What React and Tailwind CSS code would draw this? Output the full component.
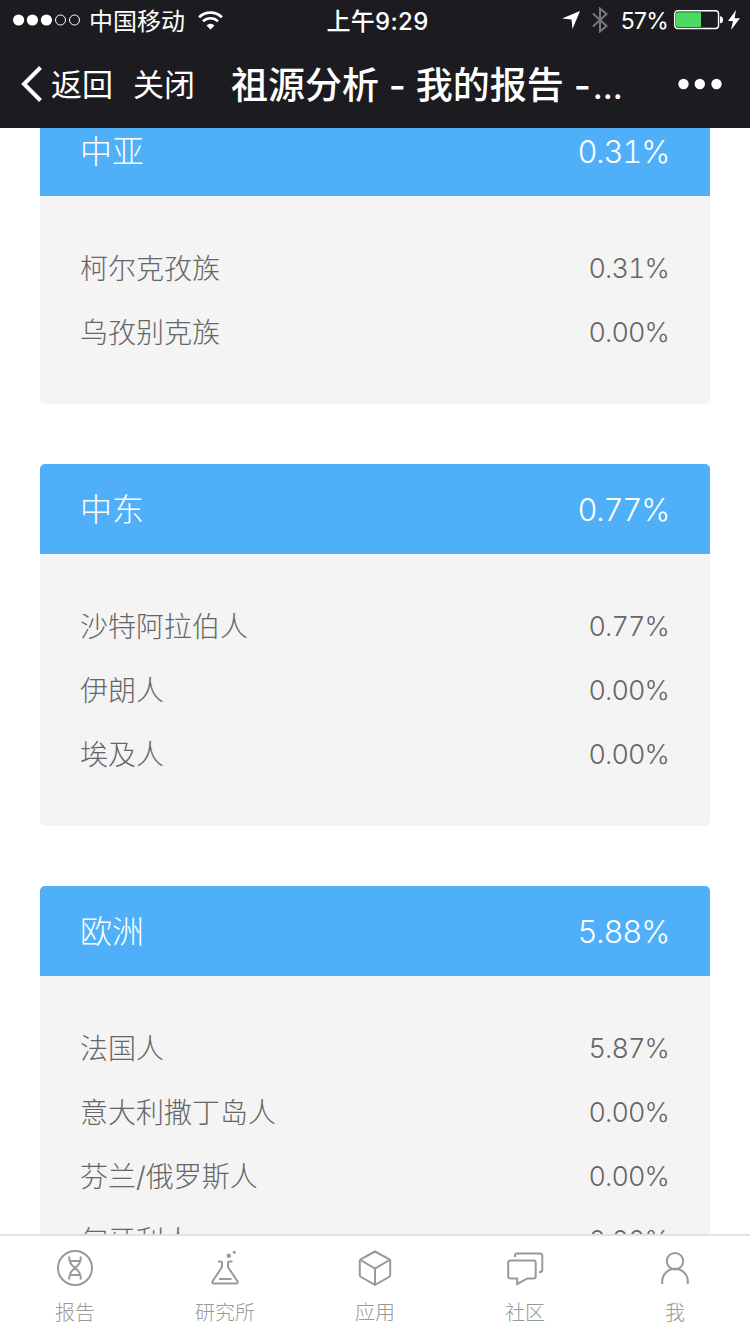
const regions = [
  {
    name: "中亚",
    percent: "0.31%",
    rows: [
      { name: "柯尔克孜族", percent: "0.31%" },
      { name: "乌孜别克族", percent: "0.00%" },
    ],
  },
  {
    name: "中东",
    percent: "0.77%",
    rows: [
      { name: "沙特阿拉伯人", percent: "0.77%" },
      { name: "伊朗人", percent: "0.00%" },
      { name: "埃及人", percent: "0.00%" },
    ],
  },
  {
    name: "欧洲",
    percent: "5.88%",
    rows: [
      { name: "法国人", percent: "5.87%" },
      { name: "意大利撒丁岛人", percent: "0.00%" },
      { name: "芬兰/俄罗斯人", percent: "0.00%" },
      { name: "匈牙利人", percent: "0.00%" },
    ],
  },
];

function StatusBar() {
  return (
    <div className="flex h-10 items-center justify-between pl-[13px] pr-[10px] text-[24px] leading-10">
      <div className="flex w-[300px] items-center">
        <svg width="68" height="12" viewBox="0 0 68 12" fill="#fff">
          <circle cx="5.6" cy="6" r="5.6" />
          <circle cx="19.4" cy="6" r="5.6" />
          <circle cx="33.4" cy="6" r="5.6" />
          <circle cx="47.5" cy="6" r="5" fill="none" stroke="#fff" />
          <circle cx="61.5" cy="6" r="5" fill="none" stroke="#fff" />
        </svg>
        <span className="ml-2 pt-[3px]">中国移动</span>
        <svg className="ml-[13px]" width="25" height="19" viewBox="0 0 25 19" fill="none" stroke="#fff" strokeWidth="2.7">
          <path d="M1.1 6.3a16.2 16.2 0 0 1 22.8 0" />
          <path d="M5 10.3a10.7 10.7 0 0 1 15 0" />
          <path d="M8.5 14.4a5.7 5.7 0 0 1 8 0l-4 4z" fill="#fff" stroke="none" />
        </svg>
      </div>
      <span className="w-[100px] whitespace-nowrap pt-[3px] font-medium tracking-[0.3px]">上午9:29</span>
      <div className="flex w-[300px] items-center justify-end">
        <svg width="18" height="18" viewBox="0 0 18 18" fill="#fff">
          <path d="M18 0L10.5 18L9.5 8.5L0 7.5z" />
        </svg>
        <svg className="ml-3" width="16" height="26" viewBox="0 0 16 26" fill="none" stroke="#78787b" strokeWidth="2">
          <path d="M1 6.5L14.5 19L8 24.5V1.5L14.5 7L1 19.5" />
        </svg>
        <span className="ml-[13px] pt-[2px] text-[23px] tracking-[-0.8px]">57%</span>
        <svg className="ml-[6px]" width="50" height="20" viewBox="0 0 50 20">
          <rect x=".75" y=".75" width="43.8" height="17.8" rx="3" fill="none" stroke="#fff" strokeWidth="1.4" />
          <path d="M4 2.2h23v14.8H4a2 2 0 0 1-2-2V4.2a2 2 0 0 1 2-2z" fill="#4cd964" />
          <path d="M46 6.2q3 0 3 3.5t-3 3.5z" fill="#fff" />
        </svg>
        <svg className="ml-1" width="12" height="20" viewBox="0 0 12 20" fill="#fff">
          <path d="M8 0L0 11h5L3 20L12 8.2H6.6z" />
        </svg>
      </div>
    </div>
  );
}

function NavBar() {
  return (
    <div className="flex h-[88px] items-center pl-[21px] pr-[28px]">
      <svg width="22" height="36" viewBox="0 0 22 36" fill="none" stroke="#fff" strokeWidth="4">
        <path d="M19.5 1.5L3 18l16.5 16.5" />
      </svg>
      <span className="ml-2 pt-[3px] text-[31px]">返回</span>
      <span className="ml-5 pt-[3px] text-[31px]">关闭</span>
      <h1 className="ml-[36px] whitespace-nowrap pt-[3px] text-[37px] font-medium">
        祖源分析 - 我的报告 -<span className="ml-[2px] text-[33px]">...</span>
      </h1>
      <svg className="ml-auto" width="44" height="12" viewBox="0 0 44 12" fill="#fff">
        <circle cx="5.5" cy="6" r="5.2" />
        <circle cx="21.8" cy="6" r="5.2" />
        <circle cx="38.5" cy="6" r="5.2" />
      </svg>
    </div>
  );
}

function RegionCard({ region }) {
  return (
    <section className="shrink-0 overflow-hidden rounded-[5px] bg-[#f4f4f4]">
      <div className="flex h-[90px] items-center justify-between bg-[#4fb0f9] px-10 pt-[2px] text-[32px] font-light text-white">
        <span>{region.name}</span>
        <span className="mr-px text-[31px] tabular-nums tracking-[-1.2px]">{region.percent}</span>
      </div>
      <div className="px-10 pt-[41px] pb-[39px] font-light text-[#666]">
        {region.rows.map((row) => (
          <div key={row.name} className="flex h-16 items-center justify-between text-[28px]">
            <span>{row.name}</span>
            <span className="mr-px text-[27px] tabular-nums tracking-[-0.9px]">{row.percent}</span>
          </div>
        ))}
      </div>
    </section>
  );
}

function DnaIcon() {
  return (
    <>
      <circle cx="20" cy="20" r="17" />
      <path d="M14.3 8.5V11C14.3 20 25.7 20 25.7 29v2.5M25.7 8.5V11C25.7 20 14.3 20 14.3 29v2.5M15 13h10M15 27h10" />
    </>
  );
}

function FlaskIcon() {
  return (
    <>
      <path d="M13 13.5h2.5q1.5 0 1.5 1.5v4L7.5 33.5q-.8 2 1.5 2h22q2.3 0 1.5-2L23 19v-4q0-1.5 1.5-1.5H27.5" />
      <path d="M14 31h12.5" />
      <circle cx="23.8" cy="7.7" r="2.2" fill="#999" stroke="none" />
      <circle cx="29.3" cy="4.3" r="1.5" fill="#999" stroke="none" />
    </>
  );
}

function CubeIcon() {
  return (
    <path d="M20 3.5L34 11q1.2.7 1.2 2v14q0 1.3-1.2 2L20 36.8L6 29q-1.2-.7-1.2-2V13q0-1.3 1.2-2zM5.5 12L20 20.5L34.5 12M20 20.5v16" />
  );
}

function ChatIcon() {
  return (
    <>
      <path d="M5.5 12.5h23q2.2 0 2.2 2.2v13.5q0 2.2-2.2 2.2h-6L12.2 36v-5.6h-6.7Q3.2 30.4 3.2 28.2V14.7q0-2.2 2.3-2.2z" />
      <path d="M10 9V7.5q0-2 2-2h23Q37.3 5.5 37.3 7.8V21.5q0 2.7-3.3 2.7" />
    </>
  );
}

function UserIcon() {
  return (
    <>
      <circle cx="20" cy="13.2" r="8.2" />
      <path d="M7.2 36v-2.5a12.8 12.8 0 0 1 25.6 0V36" />
    </>
  );
}

const tabs = [
  { label: "报告", Icon: DnaIcon },
  { label: "研究所", Icon: FlaskIcon },
  { label: "应用", Icon: CubeIcon },
  { label: "社区", Icon: ChatIcon },
  { label: "我", Icon: UserIcon },
];

export default function App() {
  return (
    <div className="flex h-[1334px] w-[750px] flex-col overflow-hidden bg-white font-['Inter','Noto_Sans_CJK_SC',sans-serif]">
      <header className="h-32 shrink-0 bg-[#1c1b20] text-white">
        <StatusBar />
        <NavBar />
      </header>
      <main className="min-h-0 flex-1 overflow-hidden px-10">
        <div className="-mt-[22px] flex flex-col gap-[60px]">
          {regions.map((region) => (
            <RegionCard key={region.name} region={region} />
          ))}
        </div>
      </main>
      <nav className="grid h-[100px] shrink-0 grid-cols-5 border-t-2 border-[#dfe3e7] bg-white">
        {tabs.map(({ label, Icon }) => (
          <div key={label} className="flex flex-col items-center pt-3 text-[#999]">
            <svg width="40" height="40" viewBox="0 0 40 40" fill="none" stroke="#999" strokeWidth="2">
              <Icon />
            </svg>
            <span className="mt-[10px] text-[20px] font-light leading-[30px]">{label}</span>
          </div>
        ))}
      </nav>
    </div>
  );
}
